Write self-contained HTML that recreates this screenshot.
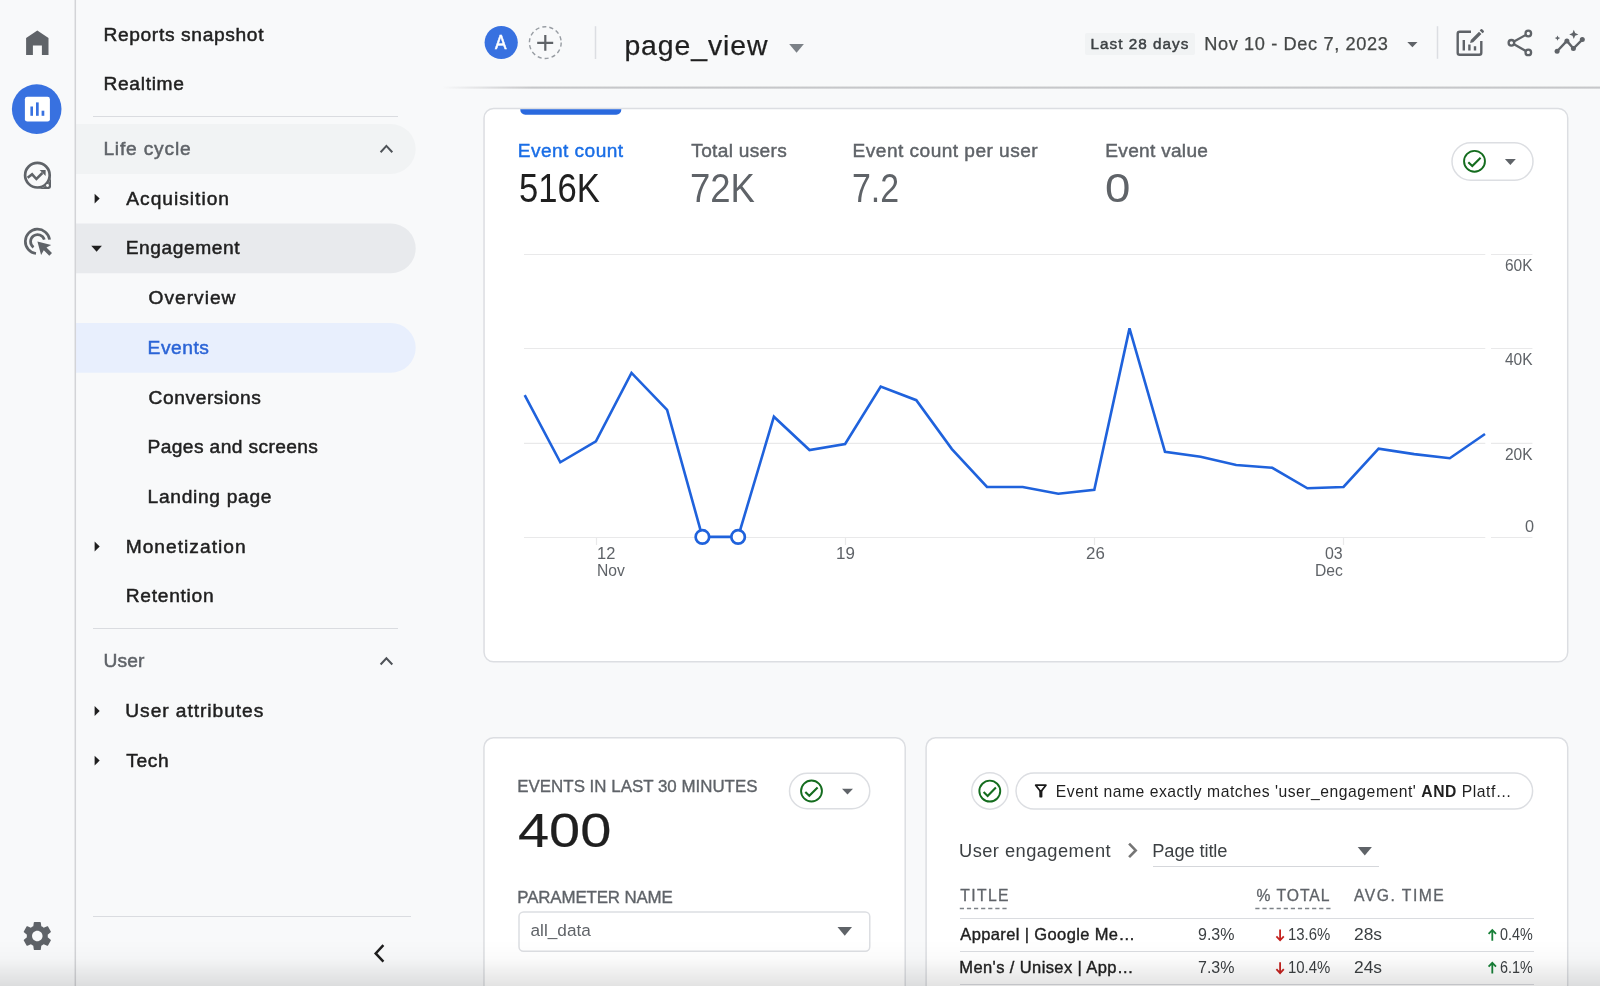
<!DOCTYPE html>
<html lang="en">
<head>
<meta charset="utf-8">
<title>Analytics – Events: page_view</title>
<style>
*{box-sizing:border-box;margin:0;padding:0}
html,body{width:1600px;height:986px;overflow:hidden}
body{position:relative;background:#f8f9fa;font-family:"Liberation Sans",sans-serif;color:#202124}
.t{position:absolute;white-space:nowrap}
.abs{position:absolute}
.rail{left:0;top:0;width:76px;height:986px;background:#f8f9fa}
.nav{left:76px;top:0;width:380px;height:986px}
.pill{position:absolute;left:76px;width:339px;height:49.5px;border-radius:0 25px 25px 0}
.hr{position:absolute;height:1px;background:#dadce0}
.card{position:absolute;background:#fff;border:1.5px solid #dadce0;border-radius:9px}
.chip{position:absolute;background:#fff;border:1.5px solid #dadce0;border-radius:26px}
svg{position:absolute;overflow:visible}
</style>
</head>
<body>
<!-- icon rail -->
<div class="abs rail"></div>

<!-- navigation -->
<svg style="left:0;top:0" width="1600" height="986" viewBox="0 0 1600 986">
<path d="M76.05 124.00H390.75a24.95 24.95 0 0 1 0 49.90H76.05Z" fill="#f1f3f4"/>
<path d="M76.05 223.60H390.90a24.80 24.80 0 0 1 0 49.60H76.05Z" fill="#e8eaed"/>
<path d="M76.05 322.90H390.80a24.90 24.90 0 0 1 0 49.80H76.05Z" fill="#e8effd"/>
</svg>
<div class="hr" style="left:93px;top:116.2px;width:305px"></div>
<div class="hr" style="left:93px;top:628px;width:305px"></div>
<div class="hr" style="left:93px;top:915.5px;width:318px"></div>

<!-- header -->
<div class="abs" style="left:442px;top:86px;width:1158px;height:3px;background:linear-gradient(rgba(112,112,116,0.06),rgba(112,112,116,0.42) 60%,rgba(112,112,116,0.10));-webkit-mask-image:linear-gradient(to right,transparent,#000 90px);mask-image:linear-gradient(to right,transparent,#000 90px)"></div>
<div class="abs" style="left:1084.8px;top:33px;width:110.5px;height:22px;background:#f1f3f4;border-radius:2px"></div>

<!-- cards, chips and fields -->
<svg style="left:0;top:0" width="1600" height="986" viewBox="0 0 1600 986">
<line x1="75.300" y1="0" x2="75.300" y2="986" stroke="#d3d4d7" stroke-width="1.500"/>
<circle cx="501.200" cy="42.500" r="16.600" fill="#3871e0"/>
<circle cx="545.300" cy="42.600" r="15.900" fill="none" stroke="#989da3" stroke-width="1.400" stroke-dasharray="4.100 3.040"/>
<line x1="595.500" y1="26.200" x2="595.500" y2="59" stroke="#dcdee2" stroke-width="1.500"/>
<line x1="1437.500" y1="26.200" x2="1437.500" y2="58.800" stroke="#dcdee2" stroke-width="1.500"/>
<g fill="#fff" stroke="#dcdee2" stroke-width="1.500">
<rect x="484.050" y="108.450" width="1083.650" height="553.400" rx="9.500"/>
<rect x="483.950" y="737.850" width="421.250" height="300" rx="9.500"/>
<rect x="926.100" y="737.850" width="641.600" height="300" rx="9.500"/>
<rect x="1452" y="142.750" width="81" height="37.500" rx="18.750"/>
<rect x="789.500" y="773.250" width="80.250" height="35.500" rx="17.750"/>
<circle cx="989.900" cy="791" r="18.150"/>
<rect x="1016" y="773.050" width="516.600" height="36" rx="18"/>
<rect x="519" y="912" width="350.750" height="39.250" rx="4.500"/>
</g>
<g stroke="#7d8288" stroke-width="1.500" stroke-dasharray="4.200 2.900"><line x1="959.800" y1="908.400" x2="1009" y2="908.400"/><line x1="1255.300" y1="908.400" x2="1331.200" y2="908.400"/></g>
<path d="M520.300 109.200h101v0.500a5 5 0 0 1-5 5h-91a5 5 0 0 1-5-5Z" fill="#2a69de"/>
</svg>
<div class="hr" style="left:1153px;top:865.800px;width:226px;height:1.300px;background:#d5d7db"></div>
<div class="hr" style="left:959.500px;top:918.300px;width:574.500px"></div>
<div class="hr" style="left:959.500px;top:951.200px;width:574.500px"></div>
<div class="hr" style="left:959.500px;top:983.700px;width:574.500px"></div>

<svg style="left:0;top:0" width="1600" height="986" viewBox="0 0 1600 986">
<g stroke="#e9e9ea" stroke-width="1.200">
<line x1="524" y1="254.5" x2="1485.300" y2="254.5"/><line x1="1491" y1="254.5" x2="1532.400" y2="254.5"/>
<line x1="524" y1="348.5" x2="1485.300" y2="348.5"/><line x1="1491" y1="348.5" x2="1532.400" y2="348.5"/>
<line x1="524" y1="443.400" x2="1485.300" y2="443.400"/><line x1="1491" y1="443.400" x2="1532.400" y2="443.400"/>
<line x1="524" y1="537.5" x2="1485.300" y2="537.5"/><line x1="1491" y1="537.5" x2="1532.400" y2="537.5"/>
<line x1="596.5" y1="537" x2="596.5" y2="545"/><line x1="845.5" y1="537" x2="845.5" y2="545"/><line x1="1094.5" y1="537" x2="1094.5" y2="545"/><line x1="1343.5" y1="537" x2="1343.5" y2="545"/>
</g>
<polyline fill="none" stroke="#1f62dc" stroke-width="2.6" stroke-linejoin="miter" points="524.7,395.2 560.3,462.3 595.9,441.3 631.5,372.9 667.1,409.8 702.4,536.9 738.1,536.9 773.9,416.7 809.5,450 845.1,444 880.7,386.5 916.3,400.2 951.9,449.1 987,487 1022.7,487 1058.3,493.8 1094.3,489.7 1129.5,328.4 1165,451.8 1200.6,456.8 1236.2,465 1272.3,467.8 1307.4,488.3 1343.5,487 1378.6,448.6 1414.2,454.1 1449.8,458.2 1485,434"/>
<circle cx="702.400" cy="536.900" r="6.750" fill="#fff" stroke="#1f62dc" stroke-width="2.700"/>
<circle cx="738.100" cy="536.900" r="6.750" fill="#fff" stroke="#1f62dc" stroke-width="2.700"/>
</svg>

<svg style="left:0;top:0" width="1600" height="986" viewBox="0 0 1600 986" fill="none">
<!-- rail: home -->
<path d="M26.1 54.9V38.1L37.3 30.6L48.5 38.1V54.9H41.9V45.4H32.9V54.9Z" fill="#5f6368"/>
<!-- rail: reports (active) -->
<circle cx="36.700" cy="109.100" r="24.800" fill="#3871e0"/>
<rect x="24.9" y="96.8" width="25" height="24.8" rx="2.4" fill="#fff"/>
<rect x="30.4" y="106.5" width="2.6" height="9.3" fill="#3871e0"/>
<rect x="36" y="102.4" width="2.7" height="13.4" fill="#3871e0"/>
<rect x="41.6" y="110.7" width="2.7" height="5.1" fill="#3871e0"/>
<!-- rail: explore -->
<circle cx="37.4" cy="175.2" r="12.3" stroke="#5f6368" stroke-width="2.7"/>
<path d="M51 175.200V186.800a2.100 2.100 0 0 1-2.100 2.100H37.400A13.650 13.650 0 0 0 51 175.200Z" fill="#5f6368"/>
<circle cx="47.500" cy="185.500" r="1.450" fill="#f8f9fa"/>
<path d="M27.600 177.800l4.500-3.500 4.300 4.700 6-6" stroke="#5f6368" stroke-width="2.500"/>
<path d="M39.600 170h6v6Z" fill="#5f6368"/>
<!-- rail: advertising -->
<g stroke="#5f6368" stroke-width="2.700">
<path d="M36 253.500A12.200 12.200 0 1 1 49.600 239.600"/>
<path d="M33.500 247.300A7 7 0 1 1 44.300 239.700"/>
</g>
<path d="M37.400 241.400l13.800 3.600-4.700 2.600 5.500 5.500-2.700 2.700-5.500-5.500-2.700 4.700Z" fill="#5f6368"/>
<!-- rail: settings gear -->
<path transform="translate(37.3 936) scale(1.458) translate(-12 -12)" fill="#5f6368" d="M19.14 12.94c.04-.3.06-.61.06-.94 0-.32-.02-.64-.07-.94l2.03-1.58c.18-.14.23-.41.12-.61l-1.92-3.32c-.12-.22-.37-.29-.59-.22l-2.39.96c-.5-.38-1.03-.7-1.62-.94L14.4 2.81c-.04-.24-.24-.41-.48-.41h-3.84c-.24 0-.43.17-.47.41L9.25 5.35C8.66 5.59 8.12 5.92 7.63 6.29L5.240 5.33c-.22-.08-.47 0-.59.22L2.740 8.87C2.620 9.080 2.660 9.340 2.860 9.480l2.030 1.580C4.840 11.360 4.800 11.690 4.800 12s.02.64.07.94l-2.030 1.580c-.18.14-.23.41-.12.61l1.920 3.320c.12.22.37.29.59.22l2.390-.96c.5.38 1.030.7 1.620.94l.36 2.540c.05.24.24.41.48.41h3.840c.24 0 .44-.17.47-.41l.36-2.540c.59-.24 1.130-.56 1.620-.94l2.390.96c.22.08.47 0 .59-.22l1.920-3.320c.12-.22.07-.47-.12-.61L19.140 12.940ZM12 15.600c-1.980 0-3.600-1.620-3.600-3.600s1.620-3.600 3.600-3.600 3.600 1.620 3.600 3.600-1.620 3.600-3.600 3.600Z"/>
<!-- nav chevrons / carets -->
<g stroke="#4f5358" stroke-width="2">
<path d="M380.6 152.2l5.8-6.3 5.9 6.3"/>
<path d="M380.6 664.5l5.8-6.3 5.9 6.3"/>
</g>
<path d="M383.400 945.200l-7.700 8.200 7.700 8.200" stroke="#1f1f1f" stroke-width="2.500"/>
<g fill="#1f1f1f">
<path d="M94.600 193.700l5.100 4.900-5.100 5Z"/>
<path d="M91.300 245.800h10.600l-5.300 5.900Z"/>
<path d="M94.600 541.500l5.100 4.900-5.100 5Z"/>
<path d="M94.600 706l5.100 4.900-5.100 5Z"/>
<path d="M94.600 755.700l5.100 4.900-5.100 5Z"/>
</g>
<!-- header: plus, carets -->
<g stroke="#5f6368" stroke-width="2.200">
<path d="M537.200 42.800h16M545.300 35v15.700"/>
</g>
<path d="M789.200 43.900h14.700l-7.350 8.800Z" fill="#7c8187"/>
<path d="M1407.300 41.900h10.200l-5.100 5.300Z" fill="#5f6368"/>
<!-- header: customize report -->
<g stroke="#5f6368" stroke-width="2.400">
<path d="M1471 31.800H1459.700a2 2 0 0 0-2 2V52.800a2 2 0 0 0 2 2H1479.300a2 2 0 0 0 2-2V41"/>
<path d="M1463.800 40v10.600M1469.400 44.400v6.200M1475 46.200v4.400"/>
</g>
<path d="M1470.800 39.900l8.200-8.200 2.400 2.400-8.200 8.200-3.100.7ZM1479.700 30.400l1.100-1.100a1 1 0 0 1 1.400 0l1.500 1.500a1 1 0 0 1 0 1.400l-1.100 1.100Z" fill="#5f6368"/>
<!-- header: share -->
<g stroke="#5f6368" stroke-width="2.300">
<circle cx="1528.300" cy="33.500" r="2.800"/><circle cx="1511.400" cy="42.800" r="2.800"/><circle cx="1528.300" cy="52.400" r="2.800"/>
<path d="M1514 41.400l11.800-6.500M1514 44.300l11.800 6.700"/>
</g>
<!-- header: insights -->
<path d="M1557.100 51.300l9.800-10.400 6.500 7.600 8.900-8.900" stroke="#5f6368" stroke-width="2.400"/>
<g fill="#5f6368">
<circle cx="1557.100" cy="51.300" r="2.500"/><circle cx="1566.900" cy="40.900" r="2.500"/><circle cx="1573.400" cy="48.500" r="2.500"/><circle cx="1582.300" cy="39.600" r="2.500"/>
<path d="M1573.800 29.800l1.300 3.300 3.300 1.300-3.300 1.300-1.300 3.300-1.300-3.300-3.300-1.300 3.300-1.300Z"/>
<path d="M1557.500 35.400l.8 1.900 1.900.8-1.900.8-.8 1.900-.8-1.900-1.900-.8 1.900-.8Z"/>
</g>
<!-- check circles -->
<g stroke="#146c1e" stroke-width="1.900">
<circle cx="1474.500" cy="161.300" r="10.450"/><path d="M1468.300 162.200l4 3.900 8.300-8.400" stroke-width="2.100"/>
<circle cx="811.500" cy="791" r="10.450"/><path d="M805.300 791.900l4 3.900 8.300-8.400" stroke-width="2.100"/>
<circle cx="989.800" cy="791.100" r="10.450"/><path d="M983.600 792l4 3.900 8.300-8.400" stroke-width="2.100"/>
</g>
<g fill="#5f6368">
<path d="M1504.900 159.100h10.900l-5.450 5.800Z"/>
<path d="M842 788.800h11l-5.500 5.800Z"/>
<path d="M837.500 927h14.500l-7.250 8.800Z"/>
<path d="M1357.700 847.100h14.200l-7.100 8.500Z"/>
</g>
<!-- filter icon -->
<path d="M1035.700 785.200H1045.900L1040.800 791.800Z" stroke="#1a1a1a" stroke-width="1.800" stroke-linejoin="round"/>
<path d="M1039.300 790.200h3.100v6.600a.7.700 0 0 1-.7.700h-1.700a.7.700 0 0 1-.7-.7Z" fill="#1a1a1a"/>
<!-- breadcrumb chevron -->
<path d="M1129.100 843.600l6.600 6.800-6.600 6.800" stroke="#757575" stroke-width="2.600"/>
<!-- trend arrows -->
<g stroke="#c5221f" stroke-width="1.800">
<path d="M1280.100 929.500v10.500M1276.400 936.400l3.700 3.900 3.700-3.900"/>
<path d="M1280.100 962.300v10.500M1276.400 969.200l3.700 3.900 3.700-3.900"/>
</g>
<g stroke="#188038" stroke-width="1.800">
<path d="M1492.300 940.800v-10.500M1488.600 933.900l3.700-3.900 3.700 3.900"/>
<path d="M1492.300 973.600v-10.500M1488.600 966.700l3.700-3.900 3.700 3.900"/>
</g>
</svg>


<div class="abs" id="labels" style="left:0;top:0;width:1600px;height:986px;will-change:transform">
<nav aria-label="Reports navigation">
<span class="t" style="left:103.40px;top:23.00px;font-size:19.2px;line-height:23px;color:#1f1f1f;letter-spacing:0.649px;-webkit-text-stroke:0.5px;">Reports snapshot</span>
<span class="t" style="left:103.40px;top:72.00px;font-size:19.2px;line-height:23px;color:#1f1f1f;letter-spacing:0.694px;-webkit-text-stroke:0.5px;">Realtime</span>
<span class="t" style="left:103.40px;top:137.00px;font-size:19.2px;line-height:23px;color:#5f6368;letter-spacing:0.810px;-webkit-text-stroke:0.5px;">Life cycle</span>
<span class="t" style="left:126.30px;top:187.00px;font-size:19.2px;line-height:23px;color:#1f1f1f;letter-spacing:0.988px;-webkit-text-stroke:0.5px;">Acquisition</span>
<span class="t" style="left:125.70px;top:236.00px;font-size:19.2px;line-height:23px;color:#1f1f1f;letter-spacing:0.569px;-webkit-text-stroke:0.5px;">Engagement</span>
<span class="t" style="left:148.60px;top:286.00px;font-size:19.2px;line-height:23px;color:#1f1f1f;letter-spacing:0.985px;-webkit-text-stroke:0.5px;">Overview</span>
<span class="t" style="left:147.60px;top:336.00px;font-size:19.2px;line-height:23px;color:#2b64d6;letter-spacing:0.527px;-webkit-text-stroke:0.5px;">Events</span>
<span class="t" style="left:148.60px;top:386.00px;font-size:19.2px;line-height:23px;color:#1f1f1f;letter-spacing:0.565px;-webkit-text-stroke:0.5px;">Conversions</span>
<span class="t" style="left:147.60px;top:435.00px;font-size:19.2px;line-height:23px;color:#1f1f1f;letter-spacing:0.377px;-webkit-text-stroke:0.5px;">Pages and screens</span>
<span class="t" style="left:147.60px;top:485.00px;font-size:19.2px;line-height:23px;color:#1f1f1f;letter-spacing:0.688px;-webkit-text-stroke:0.5px;">Landing page</span>
<span class="t" style="left:125.70px;top:535.00px;font-size:19.2px;line-height:23px;color:#1f1f1f;letter-spacing:1.016px;-webkit-text-stroke:0.5px;">Monetization</span>
<span class="t" style="left:125.70px;top:584.00px;font-size:19.2px;line-height:23px;color:#1f1f1f;letter-spacing:0.729px;-webkit-text-stroke:0.5px;">Retention</span>
<span class="t" style="left:103.40px;top:649.00px;font-size:19.2px;line-height:23px;color:#5f6368;letter-spacing:0.159px;-webkit-text-stroke:0.5px;">User</span>
<span class="t" style="left:125.30px;top:699.00px;font-size:19.2px;line-height:23px;color:#1f1f1f;letter-spacing:0.945px;-webkit-text-stroke:0.5px;">User attributes</span>
<span class="t" style="left:126.30px;top:749.00px;font-size:19.2px;line-height:23px;color:#1f1f1f;letter-spacing:0.648px;-webkit-text-stroke:0.5px;">Tech</span>
</nav>
<header aria-label="Report header">
<span class="t" style="left:494.60px;top:30.00px;font-size:19.6px;line-height:24px;color:#ffffff;-webkit-text-stroke:0.5px;transform:scaleX(0.879);transform-origin:0 0;">A</span>
<span class="t" style="left:624.40px;top:28.00px;font-size:28.4px;line-height:34px;color:#1f1f1f;letter-spacing:0.908px;-webkit-text-stroke:0.25px;">page_view</span>
<span class="t" style="left:1090.40px;top:34.00px;font-size:15.3px;line-height:19px;color:#3c4043;letter-spacing:1.028px;-webkit-text-stroke:0.45px;">Last 28 days</span>
<span class="t" style="left:1204.20px;top:33.00px;font-size:18.2px;line-height:22px;color:#444746;letter-spacing:0.624px;-webkit-text-stroke:0.25px;">Nov 10 - Dec 7, 2023</span>
</header>
<section aria-label="Event metrics and trend">
<span class="t" style="left:517.80px;top:139.00px;font-size:19.1px;line-height:23px;color:#1a6ee6;letter-spacing:0.447px;-webkit-text-stroke:0.45px;">Event count</span>
<span class="t" style="left:518.54px;top:165.00px;font-size:40px;line-height:46px;color:#1f1f1f;transform:scaleX(0.865);transform-origin:0 0;">516K</span>
<span class="t" style="left:691.30px;top:139.00px;font-size:19.1px;line-height:23px;color:#5f6368;letter-spacing:0.312px;-webkit-text-stroke:0.45px;">Total users</span>
<span class="t" style="left:690.08px;top:165.00px;font-size:40px;line-height:46px;color:#5f6368;transform:scaleX(0.912);transform-origin:0 0;">72K</span>
<span class="t" style="left:852.60px;top:139.00px;font-size:19.1px;line-height:23px;color:#5f6368;letter-spacing:0.467px;-webkit-text-stroke:0.45px;">Event count per user</span>
<span class="t" style="left:852.10px;top:165.00px;font-size:40px;line-height:46px;color:#5f6368;transform:scaleX(0.848);transform-origin:0 0;">7.2</span>
<span class="t" style="left:1105.30px;top:139.00px;font-size:19.1px;line-height:23px;color:#5f6368;letter-spacing:0.284px;-webkit-text-stroke:0.45px;">Event value</span>
<span class="t" style="left:1105.36px;top:165.00px;font-size:40px;line-height:46px;color:#5f6368;transform:scaleX(1.140);transform-origin:0 0;">0</span>
<span class="t" style="left:1505.30px;top:255.00px;font-size:17.0px;line-height:21px;color:#5f6368;transform:scaleX(0.912);transform-origin:0 0;">60K</span>
<span class="t" style="left:1505.30px;top:349.00px;font-size:17.0px;line-height:21px;color:#5f6368;transform:scaleX(0.912);transform-origin:0 0;">40K</span>
<span class="t" style="left:1505.30px;top:444.00px;font-size:17.0px;line-height:21px;color:#5f6368;transform:scaleX(0.912);transform-origin:0 0;">20K</span>
<span class="t" style="left:1524.90px;top:516.00px;font-size:17.0px;line-height:21px;color:#5f6368;transform:scaleX(0.956);transform-origin:0 0;">0</span>
<span class="t" style="left:596.63px;top:543.00px;font-size:17.0px;line-height:21px;color:#5f6368;transform:scaleX(0.968);transform-origin:0 0;">12</span>
<span class="t" style="left:596.68px;top:560.00px;font-size:17.0px;line-height:21px;color:#5f6368;transform:scaleX(0.922);transform-origin:0 0;">Nov</span>
<span class="t" style="left:835.90px;top:543.00px;font-size:17.0px;line-height:21px;color:#5f6368;transform:scaleX(0.997);transform-origin:0 0;">19</span>
<span class="t" style="left:1085.60px;top:543.00px;font-size:17.0px;line-height:21px;color:#5f6368;transform:scaleX(0.992);transform-origin:0 0;">26</span>
<span class="t" style="left:1325.30px;top:543.00px;font-size:17.0px;line-height:21px;color:#5f6368;transform:scaleX(0.937);transform-origin:0 0;">03</span>
<span class="t" style="left:1315.18px;top:560.00px;font-size:17.0px;line-height:21px;color:#5f6368;transform:scaleX(0.922);transform-origin:0 0;">Dec</span>
</section>
<section aria-label="Events in last 30 minutes">
<span class="t" style="left:517.30px;top:776.00px;font-size:16.9px;line-height:21px;color:#5f6368;letter-spacing:0.008px;-webkit-text-stroke:0.35px;">EVENTS IN LAST 30 MINUTES</span>
<span class="t" style="left:518.34px;top:802.00px;font-size:48.3px;line-height:56px;color:#1f1f1f;-webkit-text-stroke:0.2px;transform:scaleX(1.158);transform-origin:0 0;">400</span>
<span class="t" style="left:517.30px;top:887.00px;font-size:16.9px;line-height:21px;color:#5f6368;letter-spacing:-0.145px;-webkit-text-stroke:0.35px;">PARAMETER NAME</span>
<span class="t" style="left:530.50px;top:919.00px;font-size:17.2px;line-height:22px;color:#5f6368;letter-spacing:0.022px;">all_data</span>
</section>
<section aria-label="User engagement by page title">
<span class="t" style="left:1055.80px;top:782.00px;font-size:15.7px;line-height:19px;color:#1f1f1f;letter-spacing:0.528px;">Event name exactly matches 'user_engagement' <b>AND</b> Platf…</span>
<span class="t" style="left:959.00px;top:839.00px;font-size:18.3px;line-height:23px;color:#3c4043;letter-spacing:0.447px;">User engagement</span>
<span class="t" style="left:1152.30px;top:839.00px;font-size:18.3px;line-height:23px;color:#3c4043;letter-spacing:-0.117px;">Page title</span>
<span class="t" style="left:960.30px;top:886.00px;font-size:15.7px;line-height:19px;color:#5f6368;letter-spacing:1.388px;-webkit-text-stroke:0.3px;">TITLE</span>
<span class="t" style="left:1256.50px;top:886.00px;font-size:15.7px;line-height:19px;color:#5f6368;letter-spacing:0.985px;-webkit-text-stroke:0.3px;">% TOTAL</span>
<span class="t" style="left:1354.10px;top:886.00px;font-size:15.7px;line-height:19px;color:#5f6368;letter-spacing:1.476px;-webkit-text-stroke:0.3px;">AVG. TIME</span>
<span class="t" style="left:960.30px;top:924.00px;font-size:16.5px;line-height:20px;color:#1f1f1f;letter-spacing:0.372px;-webkit-text-stroke:0.4px;">Apparel | Google Me…</span>
<span class="t" style="left:1198.20px;top:924.00px;font-size:16.5px;line-height:20px;color:#3c4043;transform:scaleX(0.970);transform-origin:0 0;">9.3%</span>
<span class="t" style="left:1288.40px;top:924.00px;font-size:16.5px;line-height:20px;color:#3c4043;transform:scaleX(0.904);transform-origin:0 0;">13.6%</span>
<span class="t" style="left:1354.10px;top:924.00px;font-size:16.5px;line-height:20px;color:#3c4043;transform:scaleX(1.055);transform-origin:0 0;">28s</span>
<span class="t" style="left:1500.20px;top:924.00px;font-size:16.5px;line-height:20px;color:#3c4043;transform:scaleX(0.870);transform-origin:0 0;">0.4%</span>
<span class="t" style="left:959.30px;top:957.00px;font-size:16.5px;line-height:20px;color:#1f1f1f;letter-spacing:0.400px;-webkit-text-stroke:0.4px;">Men's / Unisex | App…</span>
<span class="t" style="left:1198.20px;top:957.00px;font-size:16.5px;line-height:20px;color:#3c4043;transform:scaleX(0.970);transform-origin:0 0;">7.3%</span>
<span class="t" style="left:1288.40px;top:957.00px;font-size:16.5px;line-height:20px;color:#3c4043;transform:scaleX(0.904);transform-origin:0 0;">10.4%</span>
<span class="t" style="left:1354.10px;top:957.00px;font-size:16.5px;line-height:20px;color:#3c4043;transform:scaleX(1.055);transform-origin:0 0;">24s</span>
<span class="t" style="left:1500.20px;top:957.00px;font-size:16.5px;line-height:20px;color:#3c4043;transform:scaleX(0.870);transform-origin:0 0;">6.1%</span>
</section>
</div>

<!-- bottom fade -->
<div class="abs" style="left:0;top:940px;width:1600px;height:46px;background:linear-gradient(rgba(0,0,0,0),rgba(0,0,0,0.015) 40%,rgba(0,0,0,0.11))"></div>
</body>
</html>
